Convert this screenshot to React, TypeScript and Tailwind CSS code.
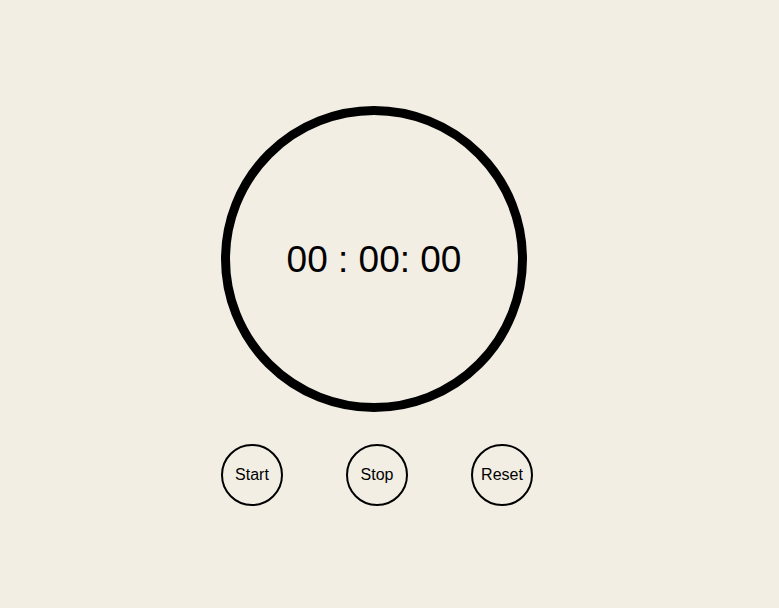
import React from 'react';

function RoundButton({ label }: { label: string }) {
  return (
    <button className="w-[62px] h-[62px] rounded-full border-2 border-black bg-transparent text-black text-[16px] flex items-center justify-center">
      {label}
    </button>
  );
}

export default function App() {
  return (
    <div className="w-full min-h-[608px] bg-[#f2eee4] font-['Liberation_Sans',Arial,sans-serif] overflow-hidden">
      <div className="w-[312px] ml-[221px] pt-[106px] flex flex-col">
        <div className="w-[306px] h-[306px] rounded-full border-[9px] border-black flex items-center justify-center">
          <span className="text-[37px] text-black leading-none whitespace-pre">00 : 00: 00</span>
        </div>
        <div className="mt-[32px] flex justify-between">
          <RoundButton label="Start" />
          <RoundButton label="Stop" />
          <RoundButton label="Reset" />
        </div>
      </div>
    </div>
  );
}
